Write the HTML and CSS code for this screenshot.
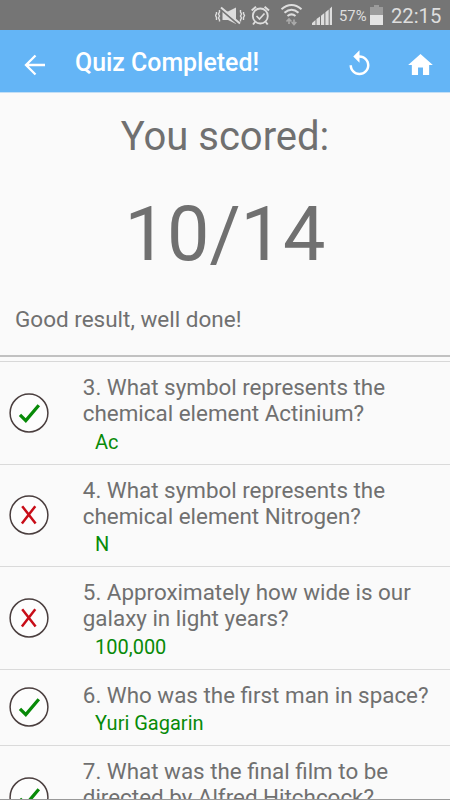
FILE: index.html
```html
<!DOCTYPE html>
<html lang="en">
<head>
<meta charset="utf-8">
<title>Quiz Completed!</title>
<link rel="stylesheet" href="styles.css">
</head>
<body>
<svg class="defs" aria-hidden="true">
  <symbol id="right" viewBox="0 0 40 40"><circle cx="20" cy="20" r="18.9" fill="#fdfdfd" stroke="#4a3e3e" stroke-width="1.5"/><path d="M11 21.800 16.800 27.600 29.800 12.300" fill="none" stroke="#088a08" stroke-width="3.300"/></symbol>
  <symbol id="wrong" viewBox="0 0 40 40"><circle cx="20" cy="20" r="18.9" fill="#fdfdfd" stroke="#4a3e3e" stroke-width="1.5"/><path d="M13.2 11.2 26.6 28.6M26.3 11.2 12.9 28.6" fill="none" stroke="#c80d18" stroke-width="2.500"/></symbol>
</svg>
<div class="screen">
  <div class="status">
    <svg class="status-icons" viewBox="0 0 128 30">
      <g fill="none" stroke="#dedede" stroke-width="1.4">
        <path d="M1.500 12v1.500l-1 2 1 2V20M4.500 10v2l-1 2 1 2-1 2 1 2v1.500M20 0M25.500 10v2l1 2-1 2 1 2-1 2v1.500M28.500 12v1.500l1 2-1 2V20"/>
        <circle cx="45.300" cy="16" r="7.500" stroke-width="1.800"/>
        <path d="m41.500 16 3 3 5-5.500" stroke-width="1.700"/>
        <path d="M36.700 10.500 41 6.800M49.600 6.800 54 10.500M40 22l-2 2.500M50.700 22l2 2.500" stroke-width="2"/>
        <path d="M66.500 9.200Q76.500.8 86.500 9.200M69.500 12.700Q76.500 6.800 83.500 12.700M72.500 16Q76.500 12.800 80.500 16" stroke-width="2.100"/>
      </g>
      <path d="M7.500 11.500H13l8-4V24l-8-4H7.500z" fill="#dedede"/>
      <path d="M6 9.500 24 25" stroke="#757575" stroke-width="2"/>
      <path d="M6 7.500 25 23.500" stroke="#dedede" stroke-width="2"/>
      <path d="M74 19v5M71.500 21.500l2.500-2.500 2.500 2.500M79 24.500v-5M76.700 22l2.300 2.500 2.300-2.500" fill="none" stroke="#aaa" stroke-width="1.600"/>
      <path d="M97 25v-2l3.500-3v5zM101.500 25v-6l3.500-2.500V25zM106 25v-9.300l3.300-2.700v12zM110.400 25V12.300l3.300-2.900V25zM114.700 25V8.800L117 6.500V25z" fill="#dedede"/>
    </svg>
    <span class="percent">57%</span>
    <svg class="battery" viewBox="0 0 13 20"><path d="M0 2h4V0h5v2h4v8H0z" fill="#9b9b9b"/><path d="M0 10h13v10H0z" fill="#e3e3e3"/></svg>
    <span class="clock">22:15</span>
  </div>
  <header class="bar">
    <svg class="back" viewBox="0 0 22 22"><path d="M21 11H2.500M11.500 1.500 2 11l9.500 9.500" fill="none" stroke="#fff" stroke-width="2.300"/></svg>
    <h1 class="title">Quiz Completed!</h1>
    <svg class="replay" viewBox="2 0 20 24"><path d="M12 5V1L7 6l5 5V7c3.310 0 6 2.690 6 6s-2.690 6-6 6-6-2.690-6-6H4c0 4.420 3.580 8 8 8s8-3.580 8-8-3.580-8-8-8z" fill="#fff"/></svg>
    <svg class="home" viewBox="2 3 20 17"><path d="M10 20v-6h4v6h5v-8h3L12 3 2 12h3v8z" fill="#fff"/></svg>
  </header>
  <section class="summary">
    <p class="label">You scored:</p>
    <p class="score">10/14</p>
    <p class="remark">Good result, well done!</p>
  </section>
  <ol class="list">
    <li class="row"><svg class="mark"><use href="#right"/></svg><div><p class="question">3. What symbol represents the<br>chemical element Actinium?</p><p class="answer">Ac</p></div></li>
    <li class="row"><svg class="mark"><use href="#wrong"/></svg><div><p class="question">4. What symbol represents the<br>chemical element Nitrogen?</p><p class="answer">N</p></div></li>
    <li class="row"><svg class="mark"><use href="#wrong"/></svg><div><p class="question">5. Approximately how wide is our<br>galaxy in light years?</p><p class="answer">100,000</p></div></li>
    <li class="row short"><svg class="mark"><use href="#right"/></svg><div><p class="question">6. Who was the first man in space?</p><p class="answer">Yuri Gagarin</p></div></li>
    <li class="row"><svg class="mark"><use href="#right"/></svg><div><p class="question">7. What was the final film to be<br>directed by Alfred Hitchcock?</p></div></li>
  </ol>
</div>
</body>
</html>
```
FILE: styles.css
```css
* { box-sizing: border-box; margin: 0; padding: 0; }
body { font-family: Roboto, sans-serif; color: #707070; background: #fafafa; }
svg { display: block; flex: none; }
.defs { width: 0; height: 0; position: absolute; }
.screen { width: 450px; height: 800px; overflow: hidden; display: flex; flex-direction: column; }
.status { height: 30px; flex: none; background: #757575; color: #dedede; display: flex; align-items: center; padding-left: 215px; }
.status-icons { width: 128px; height: 30px; margin-right: -4px; }
.percent { width: 31px; font-size: 14.800px; line-height: 32px; padding-top: 1px; }
.battery { width: 13px; height: 20px; }
.clock { font-size: 20.200px; line-height: 32px; margin-left: 8px; padding-top: 2px; white-space: nowrap; }
.bar { height: 63px; flex: none; background: #64b5f6; border-bottom: 1px solid #c3dff6; display: flex; align-items: center; padding: 5px 17px 0 24px; }
.back { width: 22px; height: 22px; margin-top: 2px; }
.title { width: 302px; margin-left: 29px; font-size: 24.900px; font-weight: 500; line-height: 30px; color: #fff; white-space: nowrap; }
.bar .title { margin-top: -1px; }
.replay { width: 25px; height: 30px; margin-left: -30px; margin-top: 1px; }
.home { width: 25px; height: 21px; margin-left: auto; margin-top: 1px; }
.summary { height: 264px; flex: none; border-bottom: 2px solid #c1c1c1; padding-top: 20px; }
.label { font-size: 40px; line-height: 47px; text-align: center; }
.score { font-size: 75.500px; line-height: 88px; margin-top: 30px; text-align: center; }
.remark { font-size: 22.5px; line-height: 27px; margin: 28px 0 0 15px; }
.list { flex: 1; overflow: hidden; list-style: none; margin-top: 4px; border-top: 1px solid #d8d8d8; border-bottom: 1px solid #999; }
.row { height: 102.500px; border-bottom: 1px solid #dadada; display: flex; align-items: center; padding-left: 9px; }
.row > div { align-self: flex-start; padding-top: 12px; }
.short { height: 76.300px; }
.mark { width: 40px; height: 40px; margin-right: 33.800px; }
.question { font-size: 22.400px; line-height: 26.300px; white-space: nowrap; }
.answer { font-size: 20px; line-height: 23.400px; color: #088a08; margin: 4px 0 0 12.200px; }
```
